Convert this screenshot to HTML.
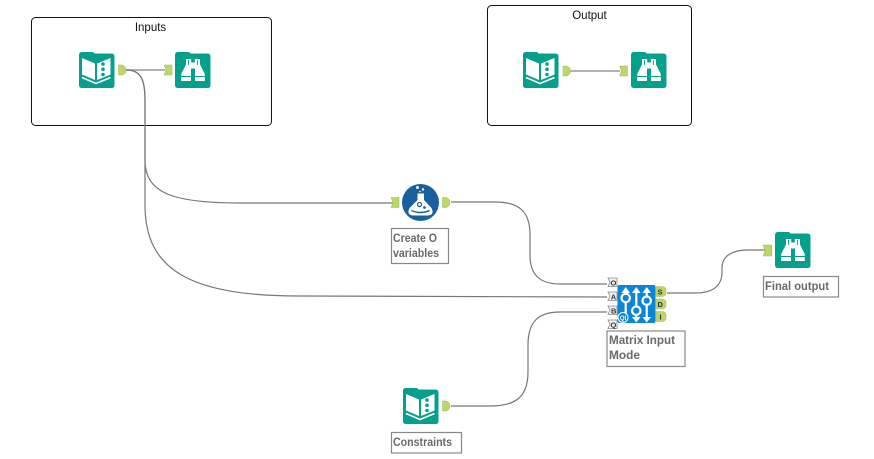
<!DOCTYPE html>
<html><head><meta charset="utf-8"><style>
html,body{margin:0;padding:0;background:#fff;width:874px;height:459px;overflow:hidden}
svg{display:block}
text{font-family:"Liberation Sans",sans-serif}
.l{font-size:11.5px;font-weight:bold;fill:#6a6a6a}
.t{font-size:11.5px;fill:#111}
.p{font-size:7.500px;font-weight:bold;fill:#333}
.w{fill:none;stroke:#777;stroke-width:1.2}
.b{fill:#fff;stroke:#888;stroke-width:1.2}
</style></head><body>
<svg width="874" height="459" viewBox="0 0 874 459" xmlns="http://www.w3.org/2000/svg">
<defs>
<path id="folder" d="M3 0H14L15.500 1.500H32.500Q35.500 1.500 35.500 4.500V33Q35.500 36 32.500 36H3Q0 36 0 33V3Q0 0 3 0Z" fill="#05a08c"/>
<g id="book"><use href="#folder"/>
<path d="M3 6L16 11.500V28L3 22.500Z M18 11.500L31.500 6V22.500L18 28Z" fill="#fff"/>
<path d="M3 25.500L17 31.500L31.500 25.500" fill="none" stroke="#fff" stroke-width="1.700"/>
<circle cx="24" cy="12" r="1.800" fill="#05a08c"/><circle cx="24" cy="17.300" r="1.800" fill="#05a08c"/><circle cx="24" cy="22.500" r="1.800" fill="#05a08c"/>
</g>
<g id="bino"><use href="#folder"/>
<path d="M11 7H16.200V10.500H19.800V7H25V12.500L29.800 22V29H20V16.500H16V29H6.200V22L11 12.500Z" fill="#fff"/>
<path d="M13.500 8V13M22.500 8V13" stroke="#05a08c" stroke-width=".9"/>
<path d="M6 24.500H16M20 24.500H30" stroke="#05a08c" stroke-width="1"/>
</g>
<path id="inA" d="M0 0H8V10H0L2 5Z" fill="#bcd669" stroke="#9fbd55" stroke-width=".5"/>
<path id="outA" d="M0 0H3.500Q7.500 1 7.500 5Q7.500 9 3.500 10H0Z" fill="#bcd669" stroke="#9fbd55" stroke-width=".5"/>
<path id="pin" d="M0 0H9V8.500H0L2 4.250Z" fill="#f2f2f2" stroke="#888" stroke-width=".8"/>
</defs>

<rect x="31.500" y="17.500" width="240" height="108" rx="4" fill="#fff" stroke="#111" stroke-width="1"/>
<rect x="487.500" y="5.500" width="204" height="120" rx="4" fill="#fff" stroke="#111" stroke-width="1"/>
<text class="t" x="150.500" y="31" text-anchor="middle">Inputs</text>
<text class="t" x="589.500" y="19" text-anchor="middle">Output</text>

<!-- wires -->
<path class="w" d="M126 70H165" style="stroke:#999;stroke-width:1.400"/>
<path class="w" d="M570 71H620" style="stroke:#999;stroke-width:1.400"/>
<path class="w" d="M126 70C140 70 145 78 145 100V160C145 192 170 203 240 203H393"/>
<path class="w" d="M126 70C140 70 145 78 145 100V205C145 270 190 296 300 296C400 297 500 297 607 297"/>
<path class="w" d="M451 202H495C520 202 530 212 530 235V255C530 275 540 284 560 284H607"/>
<path class="w" d="M451 406H490C518 406 528 395 528 372V345C528 322 538 312 560 312H607"/>
<path class="w" d="M667 293H695C715 293 722 284 722 272V268C722 256 732 250 748 250H765"/>

<!-- inputs group -->
<use href="#book" x="79" y="52"/>
<use href="#outA" x="118.500" y="65"/>
<use href="#inA" x="164" y="65"/>
<use href="#bino" x="175" y="52"/>

<!-- output group -->
<use href="#book" x="523" y="52"/>
<use href="#outA" x="563" y="66"/>
<use href="#inA" x="619.500" y="66"/>
<use href="#bino" x="631" y="52"/>

<!-- flask -->
<use href="#inA" x="391" y="197.500"/>
<circle cx="420.500" cy="202.500" r="18.500" fill="#1a5f9e"/>
<circle cx="417.500" cy="187.500" r="1.500" fill="#fff"/><circle cx="423" cy="189.500" r="1.200" fill="#fff"/><circle cx="420" cy="191.500" r=".8" fill="#fff"/>
<path d="M417.500 193.500H424V200L431.500 208Q435 215.500 427 215.500H414Q406 215.500 409.500 208L417.500 200Z" fill="#fff"/>
<circle cx="419.500" cy="204.500" r="2" fill="none" stroke="#1a5f9e" stroke-width="1.200"/>
<circle cx="424.500" cy="207.500" r="1.400" fill="#1a5f9e"/>
<path d="M411.500 210.500Q420 214.500 429.500 210.500" fill="none" stroke="#1a5f9e" stroke-width="1.500"/>
<use href="#outA" x="442.500" y="197.500"/>
<rect class="b" x="391.500" y="228.500" width="57" height="35"/>
<text class="l" x="393" y="242" textLength="44" lengthAdjust="spacingAndGlyphs">Create O</text>
<text class="l" x="393" y="257" textLength="46" lengthAdjust="spacingAndGlyphs">variables</text>

<!-- matrix -->
<use href="#pin" x="608" y="278"/><use href="#pin" x="608" y="292"/><use href="#pin" x="608" y="306"/><use href="#pin" x="608" y="320"/>
<text class="p" x="610.500" y="285.500">O</text><text class="p" x="610.800" y="299.500">A</text><text class="p" x="611" y="313.500">B</text><text class="p" x="610.500" y="327.500">Q</text>
<rect x="617.500" y="285" width="38" height="38" rx="2" fill="#0b86d6"/>
<g stroke="#fff" stroke-width="2.200" fill="none">
<path d="M625.700 291V294M625.700 302.500V316M636.300 291V306.500M636.300 315V320M646.700 291V296.500M646.700 305V319"/>
<circle cx="625.700" cy="298" r="4.200"/><circle cx="636.300" cy="310.700" r="4.200"/><circle cx="646.700" cy="300.700" r="4.200"/>
</g>
<path d="M625.700 287L630 293H621.500ZM636.300 287L640.500 293H632ZM646.700 287L651 293H642.500ZM636.300 322.500L632 317H640.500ZM646.700 322.500L642.500 317H651Z" fill="#fff"/>
<circle cx="623" cy="317.500" r="5" fill="#0b86d6" stroke="#fff" stroke-width="1"/>
<text x="623" y="320" text-anchor="middle" style="font-size:6px;font-weight:bold;fill:#fff">QI</text>
<g fill="#bcd669" stroke="#9fbd55" stroke-width=".5">
<path d="M656 286.500H661Q666 286.500 666 289.500V293Q666 296.500 661 296.500H656Z"/>
<path d="M656 299H661Q666 299 666 302V305.500Q666 309 661 309H656Z"/>
<path d="M656 311.500H661Q666 311.500 666 314.500V318.500Q666 321.500 661 321.500H656Z"/>
</g>
<text class="p" x="657.500" y="294.500">S</text><text class="p" x="657.500" y="307">D</text><text class="p" x="659.500" y="319.500">I</text>
<rect class="b" x="607" y="331" width="78" height="35.500"/>
<text class="l" x="609" y="344" textLength="66" lengthAdjust="spacingAndGlyphs">Matrix Input</text>
<text class="l" x="609" y="359" textLength="31" lengthAdjust="spacingAndGlyphs">Mode</text>

<!-- final -->
<g transform="translate(763 245) scale(1.100)"><use href="#inA"/></g>
<use href="#bino" x="775" y="232"/>
<rect class="b" x="763.500" y="276.500" width="75" height="20.500"/>
<text class="l" x="765" y="290" textLength="64" lengthAdjust="spacingAndGlyphs">Final output</text>

<!-- constraints -->
<use href="#book" x="403" y="388"/>
<use href="#outA" x="442.500" y="401"/>
<rect class="b" x="391.500" y="432.500" width="70" height="20.500"/>
<text class="l" x="393" y="446" textLength="59" lengthAdjust="spacingAndGlyphs">Constraints</text>
</svg>
</body></html>
